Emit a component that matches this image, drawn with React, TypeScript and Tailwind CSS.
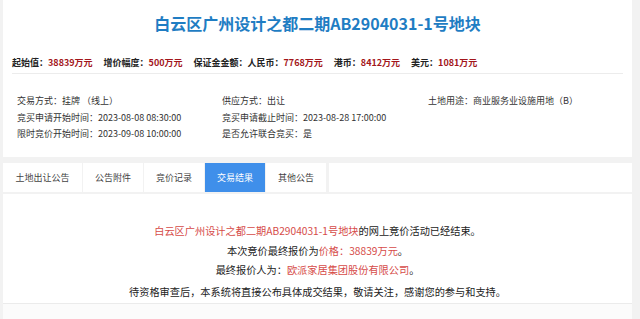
const font = { fontFamily: '"Microsoft YaHei", "Noto Sans CJK SC", "Noto Sans", sans-serif' }

const infoRows = [
  ['交易方式：挂牌 （线上）', '供应方式：出让', '土地用途：商业服务业设施用地（B）'],
  ['竞买申请开始时间：2023-08-08 08:30:00', '竞买申请截止时间：2023-08-28 17:00:00', ''],
  ['限时竞价开始时间：2023-09-08 10:00:00', '是否允许联合竞买：是', ''],
]

const tabs = ['土地出让公告', '公告附件', '竞价记录', '交易结果', '其他公告']

function PriceItem({ label, value }: { label: string; value: string }) {
  return (
    <span className="mr-[11px]">
      <span className="text-[#222]">{label}</span>
      <span className="text-[#a3161b]">{value}</span>
    </span>
  )
}

export default function App() {
  const title = '白云区广州设计之都二期AB2904031-1号地块'
  return (
    <div className="w-[640px] h-[319px] overflow-hidden bg-[#f2f2f2]" style={font}>
      <div className="ml-[3px] mr-[8px] bg-white h-[157px] pt-[11px]">
        <h1 className="text-center text-[16px] font-bold text-[#1f7dc3] leading-[24px]">{title}</h1>
        <div className="mt-[21px] mx-[9px] pb-[3px] border-b border-[#ececec] text-[9px] font-bold leading-[14px] whitespace-nowrap">
          <PriceItem label="起始值：" value="38839万元" />
          <PriceItem label="增价幅度：" value="500万元" />
          <span className="text-[#222]">保证金金额：</span>
          <PriceItem label="人民币：" value="7768万元" />
          <PriceItem label="港币：" value="8412万元" />
          <PriceItem label="美元：" value="1081万元" />
        </div>
        <div className="mt-[19px] pl-[14px] text-[9px] text-[#333] leading-[16.5px]">
          {infoRows.map((row, i) => (
            <div key={i} className="grid grid-cols-[205px_206px_1fr]">
              {row.map((c, j) => (
                <span key={j} className="whitespace-nowrap">{c}</span>
              ))}
            </div>
          ))}
        </div>
      </div>

      <div className="mt-[6px] ml-[3px] mr-[8px] flex h-[29px] gap-px">
        {tabs.map((t) => (
          <div
            key={t}
            className={
              t === '交易结果'
                ? 'w-[60px] flex items-center justify-center text-[9px] bg-[#3f8fea] text-white'
                : t === '土地出让公告'
                ? 'w-[79px] flex items-center justify-center text-[9px] bg-white text-[#444]'
                : 'w-[60px] flex items-center justify-center text-[9px] bg-white text-[#444]'
            }
          >
            {t}
          </div>
        ))}
        <div className="flex-1 ml-[2px] bg-white" />
      </div>

      <div className="mt-[2px] ml-[3px] mr-[8px] bg-white h-[110px] pt-[27px] text-center text-[10.2px] text-[#222] leading-[19.5px] border-b border-[#ebebeb]">
        <p>
          <span className="text-[#d64b48]">{title}</span>的网上竞价活动已经结束。
        </p>
        <p>
          本次竞价最终报价为<span className="text-[#d64b48]">价格：38839万元</span>。
        </p>
        <p>
          最终报价人为：<span className="text-[#d64b48]">欧派家居集团股份有限公司</span>。
        </p>
        <p className="mt-[2px]">待资格审查后，本系统将直接公布具体成交结果，敬请关注，感谢您的参与和支持。</p>
      </div>
      <div className="ml-[3px] mr-[8px] bg-[#fbfbfb] h-[20px]" />
    </div>
  )
}
